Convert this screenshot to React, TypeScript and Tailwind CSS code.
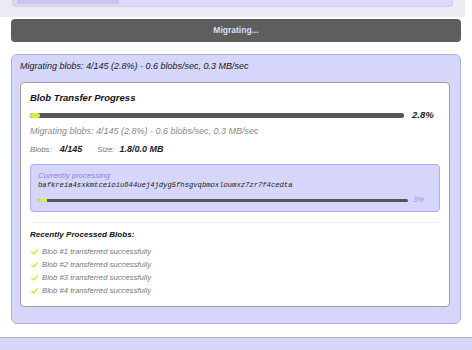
import React from "react";

const Check = () => (
  <svg width="7" height="6" viewBox="0 0 7 6" className="shrink-0">
    <path d="M0.8 3.2 L2.6 5 L6.2 0.8" fill="none" stroke="#c2ee3c" strokeWidth="1.3" strokeLinecap="round" strokeLinejoin="round" />
  </svg>
);

export default function App() {
  const items = [1, 2, 3, 4];
  return (
    <div className="w-[472px] h-[350px] overflow-hidden bg-white flex flex-col" style={{ fontFamily: "'Liberation Sans', Arial, sans-serif" }}>
      {/* top fragment */}
      <div className="w-[465px] h-[17px] bg-[#ecebf3] shrink-0 flex flex-col">
        <div className="mx-[12px] h-[7px] bg-[#d9d9f8] border border-t-0 border-[#cfcfe8] rounded-b-[4px] flex items-start px-[4px]">
          <div className="w-[102px] h-[4px] bg-[#c6c6ef]" />
        </div>
      </div>
      {/* button */}
      <div className="mt-[2px] mx-[11px] h-[23px] shrink-0 bg-[#5e5e5e] rounded-[4px] flex items-center justify-center text-[8.5px] font-bold text-[#dcdcfa]">
        Migrating...
      </div>
      {/* lavender card */}
      <div className="mt-[12px] ml-[11px] w-[450px] h-[270px] shrink-0 bg-[#d6d6fb] border border-[#aeaee6] rounded-[6px] pl-[8px] pt-[6px] flex flex-col">
        <div className="h-[12px] flex items-center text-[9px] italic text-[#1a1a1a]">
          Migrating blobs: 4/145 (2.8%) - 0.6 blobs/sec, 0.3 MB/sec
        </div>
        <div className="mt-[9px] w-[430px] h-[225px] bg-white border border-[#9e9e9e] rounded-[4px] pl-[9px] pt-[8px] flex flex-col">
          <div className="h-[14px] flex items-center text-[9.5px] font-bold italic text-[#111]">Blob Transfer Progress</div>
          <div className="mt-[5px] h-[10px] flex items-center">
            <div className="w-[374px] h-[5px] rounded-full bg-[#555] flex overflow-hidden">
              <div className="w-[10px] h-full bg-[#c6f542] rounded-full" />
            </div>
            <div className="ml-[8px] text-[9.5px] font-bold italic text-[#222]">2.8%</div>
          </div>
          <div className="mt-[6px] h-[12px] flex items-center text-[9px] italic text-[#8a8a8a]">
            Migrating blobs: 4/145 (2.8%) - 0.6 blobs/sec, 0.3 MB/sec
          </div>
          <div className="mt-[6px] h-[12px] flex items-center italic">
            <span className="text-[7.8px] text-[#777]">Blobs:</span>
            <span className="ml-[8px] text-[9px] font-bold text-[#222]">4/145</span>
            <span className="ml-[15px] text-[7.8px] text-[#777]">Size:</span>
            <span className="ml-[5px] text-[9px] font-bold text-[#222]">1.8/0.0 MB</span>
          </div>
          <div className="mt-[8px] w-[410px] h-[48px] bg-[#d6d6fb] border border-[#ababee] rounded-[4px] pl-[7px] pt-[6px] flex flex-col">
            <div className="h-[10px] flex items-center text-[7.8px] italic text-[#8c80e0]">Currently processing:</div>
            <div className="h-[8px] flex items-center text-[7.2px] italic text-[#222]" style={{ fontFamily: "'Liberation Mono', monospace" }}>
              bafkreia4sxkmtceioiu644uej4jdyg5fhsgvqbmoxloumxz7zr7f4cedta
            </div>
            <div className="mt-[7px] h-[8px] flex items-center">
              <div className="w-[370px] h-[3px] rounded-full bg-[#555] flex overflow-hidden">
                <div className="w-[9px] h-full bg-[#c6f542]" />
              </div>
              <div className="ml-[5px] text-[7.5px] italic text-[#9a8fe8]">3%</div>
            </div>
          </div>
          <div className="mt-[10px] w-[409px] h-px bg-[#eeeeee]" />
          <div className="mt-[6px] h-[12px] flex items-center text-[8.1px] font-bold italic text-[#111]">Recently Processed Blobs:</div>
          <div className="mt-[4px] flex flex-col">
            {items.map((n) => (
              <div key={n} className="h-[13px] flex items-center pl-[1px]">
                <Check />
                <span className="ml-[4px] text-[7.7px] italic text-[#777]">Blob #{n} transferred successfully</span>
              </div>
            ))}
          </div>
        </div>
      </div>
      {/* bottom */}
      <div className="mt-[13px] flex-1 bg-[#d6d6fb] border-t border-[#b4b4b4]" />
    </div>
  );
}
